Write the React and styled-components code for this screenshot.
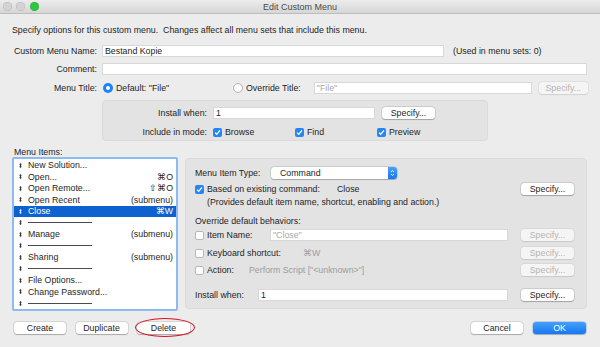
import styled, { createGlobalStyle } from 'styled-components';

const GlobalStyle = createGlobalStyle`
  html, body {
    margin: 0;
    padding: 0;
    overflow: hidden;
  }
  body {
    font-family: 'Liberation Sans', Arial, sans-serif;
    font-size: 8.8px;
    color: #1e1e1e;
  }
`;

const Window = styled.div`
  width: 600px;
  height: 347px;
  background: #ececec;
  display: flex;
  flex-direction: column;
  overflow: hidden;
`;

const TitleBar = styled.div`
  height: 13px;
  flex: none;
  display: grid;
  grid-template-columns: 1fr auto 1fr;
  align-items: center;
  background: linear-gradient(#ececec, #d6d6d6);
  border-bottom: 1px solid #bdbdbd;
`;

const Lights = styled.div`
  display: flex;
  gap: 4.5px;
  padding-left: 2.5px;
`;

const Light = styled.span`
  width: 9px;
  height: 9px;
  border-radius: 50%;
  background: ${(p) => p.$color};
  box-shadow: inset 0 0 0 0.5px rgba(0, 0, 0, 0.15);
`;

const Title = styled.div`
  font-size: 9px;
  color: #4b4b4b;
`;

const Content = styled.div`
  flex: 1;
  display: flex;
  flex-direction: column;
  padding: 0 13px 0 12px;
`;

const Description = styled.div`
  margin-top: 11px;
  line-height: 10px;
`;

const Row = styled.div`
  display: flex;
  align-items: center;
  height: ${(p) => p.$h || 12}px;
  margin-top: ${(p) => p.$mt || 0}px;
`;

const Label = styled.div`
  flex: none;
  width: ${(p) => p.$w}px;
  margin-right: ${(p) => p.$gap || 5}px;
  text-align: ${(p) => (p.$left ? 'left' : 'right')};
  white-space: nowrap;
`;

const Field = styled.div`
  box-sizing: border-box;
  height: 12px;
  line-height: 12px;
  padding: 0 3px;
  background: #fff;
  box-shadow: inset 0 0 0 1px #d8d8d8, inset 0 1px 0 #cacaca;
  color: ${(p) => (p.$placeholder ? '#a8a8a8' : '#1e1e1e')};
  white-space: nowrap;
  ${(p) => (p.$w ? `width: ${p.$w}px; flex: none;` : 'flex: 1;')}
  margin-left: ${(p) => p.$ml || 0}px;
`;

const Button = styled.div`
  box-sizing: border-box;
  flex: none;
  width: ${(p) => p.$w || 53}px;
  height: 12px;
  display: flex;
  align-items: center;
  justify-content: center;
  border-radius: 3px;
  margin-left: ${(p) => p.$ml || 0}px;
  background: ${(p) => (p.$disabled ? '#f5f5f5' : '#fff')};
  color: ${(p) => (p.$disabled ? '#b4b4b4' : '#1e1e1e')};
  box-shadow: 0 0 0 0.5px rgba(0, 0, 0, ${(p) => (p.$disabled ? 0.08 : 0.17)}),
    0 0.5px 1px rgba(0, 0, 0, ${(p) => (p.$disabled ? 0.08 : 0.22)});
  white-space: nowrap;
`;

const PrimaryButton = styled(Button)`
  background: linear-gradient(#45a0fb, #1677f0);
  color: #fff;
  box-shadow: 0 0 0 0.5px rgba(0, 60, 160, 0.3), 0 0.5px 1px rgba(0, 0, 0, 0.2);
`;

const Radio = styled.span`
  box-sizing: border-box;
  flex: none;
  width: 10px;
  height: 10px;
  border-radius: 50%;
  display: flex;
  align-items: center;
  justify-content: center;
  background: ${(p) => (p.$on ? '#1c84fb' : '#fff')};
  border: ${(p) => (p.$on ? 'none' : '0.5px solid #b3b3b3')};
  margin-right: 3px;
  &::after {
    content: '';
    width: 4px;
    height: 4px;
    border-radius: 50%;
    background: ${(p) => (p.$on ? '#fff' : 'transparent')};
  }
`;

const RadioOption = styled.div`
  display: flex;
  align-items: center;
  flex: none;
  width: ${(p) => (p.$w ? `${p.$w}px` : 'auto')};
`;

const Box = styled.span`
  box-sizing: border-box;
  flex: none;
  width: 9px;
  height: 9px;
  border-radius: 2px;
  display: flex;
  align-items: center;
  justify-content: center;
  background: ${(p) => (p.$on ? '#2584f6' : '#fff')};
  border: ${(p) => (p.$on ? 'none' : '0.5px solid #b8b8b8')};
  margin-right: 3px;
`;

const Check = ({ on }) => (
  <Box $on={on}>
    {on && (
      <svg width="9" height="9" viewBox="0 0 9 9">
        <path d="M2 4.6 L3.7 6.3 L7 2.4" fill="none" stroke="#fff" strokeWidth="1.3" />
      </svg>
    )}
  </Box>
);

const InstallBox = styled.div`
  box-sizing: border-box;
  width: 386px;
  height: 41px;
  margin: 6px 0 0 90px;
  padding-top: 6px;
  background: #e3e3e3;
  border: 1px solid #dadada;
  border-radius: 4px;
`;

const ModeOption = styled.div`
  display: flex;
  align-items: center;
  width: 82px;
  flex: none;
`;

const Lower = styled.div`
  display: flex;
  gap: 7px;
  margin-top: 6px;
`;

const LeftCol = styled.div`
  width: 166px;
  flex: none;
  display: flex;
  flex-direction: column;
`;

const SectionLabel = styled.div`
  line-height: 10px;
  margin-left: ${(p) => p.$ml || 0}px;
  margin-top: ${(p) => p.$mt || 0}px;
`;

const List = styled.div`
  box-sizing: border-box;
  height: 154px;
  background: #fff;
  border: 2px solid #8dbaf1;
  border-radius: 2px;
  padding-top: 0.5px;
`;

const ListRow = styled.div`
  display: flex;
  align-items: center;
  height: 11.5px;
  padding: 0 3px 0 5px;
  background: ${(p) => (p.$selected ? '#0d62cf' : 'transparent')};
  color: ${(p) => (p.$selected ? '#fff' : '#1e1e1e')};
  white-space: nowrap;
`;

const Handle = styled.svg`
  flex: none;
  margin-right: 6px;
`;

const Shortcut = styled.span`
  margin-left: auto;
`;

const Separator = styled.span`
  width: 64px;
  height: 1px;
  background: #4a4a4a;
`;

const Panel = styled.div`
  box-sizing: border-box;
  flex: 1;
  height: 151px;
  margin-top: 11px;
  padding: 8px 12px 0 9px;
  background: #e3e3e3;
  border: 1px solid #dadada;
  border-radius: 4px;
  display: flex;
  flex-direction: column;
`;

const Select = styled.div`
  box-sizing: border-box;
  width: 126px;
  height: 12px;
  display: flex;
  align-items: center;
  background: #fff;
  border-radius: 3px;
  padding-left: 9px;
  box-shadow: 0 0 0 0.5px rgba(0, 0, 0, 0.17), 0 0.5px 1px rgba(0, 0, 0, 0.2);
`;

const Stepper = styled.span`
  margin-left: auto;
  width: 9px;
  height: 12px;
  border-radius: 0 3px 3px 0;
  background: linear-gradient(#4aa2fb, #1677f0);
  display: flex;
  align-items: center;
  justify-content: center;
`;

const Value = styled.span`
  color: ${(p) => (p.$dim ? '#9c9c9c' : '#1e1e1e')};
  margin-left: ${(p) => p.$ml || 0}px;
`;

const Note = styled.div`
  line-height: 10px;
  margin-top: 2px;
  padding-left: 12px;
`;

const Footer = styled.div`
  display: flex;
  align-items: center;
  gap: 9.5px;
  margin-top: 11px;
  padding: 0 1px 0 2px;
`;

const Circled = styled.div`
  position: relative;
  &::after {
    content: '';
    position: absolute;
    top: -4px;
    bottom: -3px;
    left: -2px;
    right: -5px;
    border: 1.6px solid #d8121f;
    border-radius: 50%;
  }
`;

const RightGroup = styled.div`
  display: flex;
  gap: 10px;
  margin-left: auto;
`;

const Push = styled.div`
  margin-left: auto;
`;

const items = [
  { name: 'New Solution...' },
  { name: 'Open...', key: '⌘O' },
  { name: 'Open Remote...', key: '⇧⌘O' },
  { name: 'Open Recent', key: '(submenu)' },
  { name: 'Close', key: '⌘W', selected: true },
  { sep: true },
  { name: 'Manage', key: '(submenu)' },
  { sep: true },
  { name: 'Sharing', key: '(submenu)' },
  { sep: true },
  { name: 'File Options...' },
  { name: 'Change Password...' },
  { sep: true },
];

const DragHandle = ({ light }) => (
  <Handle width="3" height="5" viewBox="0 0 3 5">
    <path d="M1.5 0 L3 1.5 L0 1.5 Z M1.5 5 L3 3.5 L0 3.5 Z M0.9 1.4 H2.1 V3.6 H0.9 Z" fill={light ? '#dfe9f8' : '#3a3a3a'} />
  </Handle>
);

const App = () => {
  return (
    <>
      <GlobalStyle />
      <Window>
        <TitleBar>
          <Lights>
            <Light $color="#d3d3d3" />
            <Light $color="#d3d3d3" />
            <Light $color="#2bc840" />
          </Lights>
          <Title>Edit Custom Menu</Title>
          <div />
        </TitleBar>
        <Content>
          <Description>
            Specify options for this custom menu.&nbsp; Changes affect all menu sets that include this menu.
          </Description>

          <Row $mt={10}>
            <Label $w={85}>Custom Menu Name:</Label>
            <Field $w={342}>Bestand Kopie</Field>
            <Value $ml={9}>(Used in menu sets: 0)</Value>
          </Row>
          <Row $mt={6}>
            <Label $w={85}>Comment:</Label>
            <Field />
          </Row>
          <Row $mt={7}>
            <Label $w={85} $gap={6}>Menu Title:</Label>
            <RadioOption $w={130}>
              <Radio $on />
              Default: "File"
            </RadioOption>
            <RadioOption>
              <Radio />
              Override Title:
            </RadioOption>
            <Field $w={218} $ml={13} $placeholder>"File"</Field>
            <Button $w={49} $ml={7} $disabled>Specify...</Button>
          </Row>

          <InstallBox>
            <Row>
              <Label $w={104} $gap={6}>Install when:</Label>
              <Field $w={162}>1</Field>
              <Button $w={53} $ml={7}>Specify...</Button>
            </Row>
            <Row $mt={7}>
              <Label $w={104} $gap={6}>Include in mode:</Label>
              <ModeOption><Check on />Browse</ModeOption>
              <ModeOption><Check on />Find</ModeOption>
              <ModeOption><Check on />Preview</ModeOption>
            </Row>
          </InstallBox>

          <Lower>
            <LeftCol>
              <SectionLabel $ml={2}>Menu Items:</SectionLabel>
              <List>
                {items.map((it, i) => (
                  <ListRow key={i} $selected={it.selected}>
                    <DragHandle light={it.selected} />
                    {it.sep ? <Separator /> : it.name}
                    {it.key && <Shortcut>{it.key}</Shortcut>}
                  </ListRow>
                ))}
              </List>
            </LeftCol>

            <Panel>
              <Row>
                <Label $w={71} $gap={0} $left>Menu Item Type:</Label>
                <Select>
                  Command
                  <Stepper>
                    <svg width="5" height="8" viewBox="0 0 5 8">
                      <path d="M1 3 L2.5 1.5 L4 3 M1 5 L2.5 6.5 L4 5" fill="none" stroke="#fff" strokeWidth="0.9" />
                    </svg>
                  </Stepper>
                </Select>
              </Row>
              <Row $mt={4}>
                <Check on />
                <Label $w={125} $gap={0} $left>Based on existing command:</Label>
                Close
                <Push />
                <Button>Specify...</Button>
              </Row>
              <Note>(Provides default item name, shortcut, enabling and action.)</Note>
              <SectionLabel $mt={9}>Override default behaviors:</SectionLabel>
              <Row $mt={3}>
                <Check />
                <Label $w={58} $gap={0} $left>Item Name:</Label>
                <Field $placeholder>"Close"</Field>
                <Button $ml={13} $disabled>Specify...</Button>
              </Row>
              <Row $mt={6}>
                <Check />
                <Label $w={91} $gap={0} $left>Keyboard shortcut:</Label>
                <Value $dim>⌘W</Value>
                <Push />
                <Button $disabled>Specify...</Button>
              </Row>
              <Row $mt={5}>
                <Check />
                <Label $w={37} $gap={0} $left>Action:</Label>
                <Value $dim>Perform Script ["&lt;unknown&gt;"]</Value>
                <Push />
                <Button $disabled>Specify...</Button>
              </Row>
              <Row $mt={13}>
                <Label $w={58} $gap={0} $left>Install when:</Label>
                <Field>1</Field>
                <Button $ml={13}>Specify...</Button>
              </Row>
            </Panel>
          </Lower>

          <Footer>
            <Button $w={52}>Create</Button>
            <Button $w={52}>Duplicate</Button>
            <Circled>
              <Button $w={53}>Delete</Button>
            </Circled>
            <RightGroup>
              <Button $w={52}>Cancel</Button>
              <PrimaryButton $w={53}>OK</PrimaryButton>
            </RightGroup>
          </Footer>
        </Content>
      </Window>
    </>
  );
};

export default App;
